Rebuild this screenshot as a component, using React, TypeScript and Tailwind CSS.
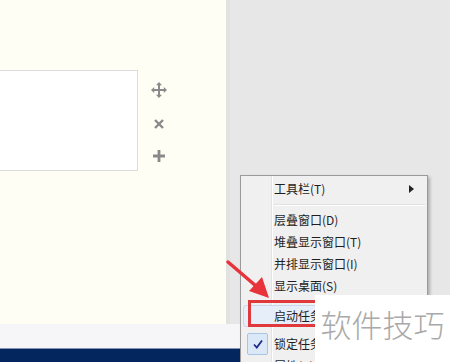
import React from "react";

const font = { fontFamily: '"Noto Sans CJK SC", "Noto Sans", sans-serif' };

function Item({ label, arrow, hover, check }: { label: string; arrow?: boolean; hover?: boolean; check?: boolean }) {
  return (
    <div className="relative flex h-[22px] items-center">
      {hover && <div className="absolute left-[2px] right-[2px] top-0 bottom-0 rounded-[3px] border border-[#c9d8ec] bg-[#e6eefa]" />}
      <div className="relative flex w-[33px] justify-center">
        {check && (
          <div className="flex h-[22px] w-[21px] items-center justify-center rounded-[2px] border border-[#a8c4e6] bg-[#dbe8f8]">
            <svg width="12" height="12" viewBox="0 0 12 12">
              <path d="M2 6.5 L4.8 9.5 L10 2.5" stroke="#1f2a8a" strokeWidth="1.8" fill="none" />
            </svg>
          </div>
        )}
      </div>
      <span className="relative text-[12px] text-[#1e1e1e]" style={font}>{label}</span>
      {arrow && (
        <svg className="absolute right-[13px]" width="5" height="8" viewBox="0 0 5 8">
          <path d="M0 0 L5 4 L0 8 Z" fill="#222" />
        </svg>
      )}
    </div>
  );
}

export default function App() {
  return (
    <div className="relative h-[362px] w-[450px] overflow-hidden">
      <div className="flex h-[324px]">
        <div className="flex w-[226px] flex-col bg-[#fffef4] pt-[70px]">
          <div className="flex items-start">
            <div className="h-[101px] w-[138px] border border-l-0 border-[#dcdcd8] bg-white" />
            <div className="ml-[12px] flex flex-col items-center pt-[11px] text-[#8a8a8a]">
              <svg width="18" height="18" viewBox="0 0 18 18" fill="#8a8a8a">
                <path d="M9 1 L12 4.2 L10 4.2 L10 8 L13.8 8 L13.8 6 L17 9 L13.8 12 L13.8 10 L10 10 L10 13.8 L12 13.8 L9 17 L6 13.8 L8 13.8 L8 10 L4.2 10 L4.2 12 L1 9 L4.2 6 L4.2 8 L8 8 L8 4.2 L6 4.2 Z" />
              </svg>
              <svg className="mt-[18px]" width="14" height="14" viewBox="0 0 14 14">
                <path d="M3 3 L11 11 M11 3 L3 11" stroke="#8a8a8a" strokeWidth="2.4" />
              </svg>
              <svg className="mt-[17px]" width="16" height="16" viewBox="0 0 16 16">
                <path d="M8 2 L8 14 M2 8 L14 8" stroke="#8a8a8a" strokeWidth="2.8" />
              </svg>
            </div>
          </div>
        </div>
        <div className="w-[4px] bg-[#e2e2e0]" />
        <div className="flex-1 bg-[#e7e7e7]" />
      </div>
      <div className="h-[24px] bg-[#f6f6f8]" />
      <div className="h-[1px] bg-[#8495b5]" />
      <div className="h-[13px] bg-[#04265f]" />

      {/* context menu */}
      <div className="absolute left-[240px] top-[175px] h-[200px] w-[188px] border border-[#9a9a9a] bg-[#f0f0f0] py-[2px] shadow-[2px_2px_3px_rgba(0,0,0,0.25)]">
        <div className="absolute left-[30px] top-0 bottom-0 w-[1px] bg-[#e2e3e3]" />
        <div className="absolute left-[31px] top-0 bottom-0 w-[1px] bg-white" />
        <Item label="工具栏(T)" arrow />
        <div className="flex h-[9px] items-center pl-[33px] pr-[2px]">
          <div className="h-[2px] w-full border-t border-b border-t-[#e0e0e0] border-b-white" />
        </div>
        <Item label="层叠窗口(D)" />
        <Item label="堆叠显示窗口(T)" />
        <Item label="并排显示窗口(I)" />
        <Item label="显示桌面(S)" />
        <div className="flex h-[8px] items-center pl-[33px] pr-[2px]">
          <div className="h-[2px] w-full border-t border-b border-t-[#e0e0e0] border-b-white" />
        </div>
        <Item label="启动任务管理器(K)" hover />
        <div className="h-[6px]" />
        <Item label="锁定任务栏(L)" check />
        <Item label="属性(R)" />
      </div>

      {/* red highlight rectangle */}
      <div className="absolute left-[248px] top-[300px] h-[27px] w-[90px] border-[3px] border-[#e0393b]" />

      {/* arrow */}
      <svg className="absolute left-0 top-0" width="450" height="362" viewBox="0 0 450 362">
        <path d="M228 262 L256 286" stroke="#e8333a" strokeWidth="3.5" strokeLinecap="round" />
        <path d="M269 298 L249 291 L262 277 Z" fill="#e8333a" />
      </svg>

      {/* watermark */}
      <div className="absolute left-[315px] top-[295px] flex h-[67px] w-[135px] items-center justify-center bg-white pb-[8px]">
        <span className="text-[31px] text-[#a9a9a9]" style={{ fontFamily: '"Noto Sans CJK SC", sans-serif', fontWeight: 300 }}>软件技巧</span>
      </div>
    </div>
  );
}
